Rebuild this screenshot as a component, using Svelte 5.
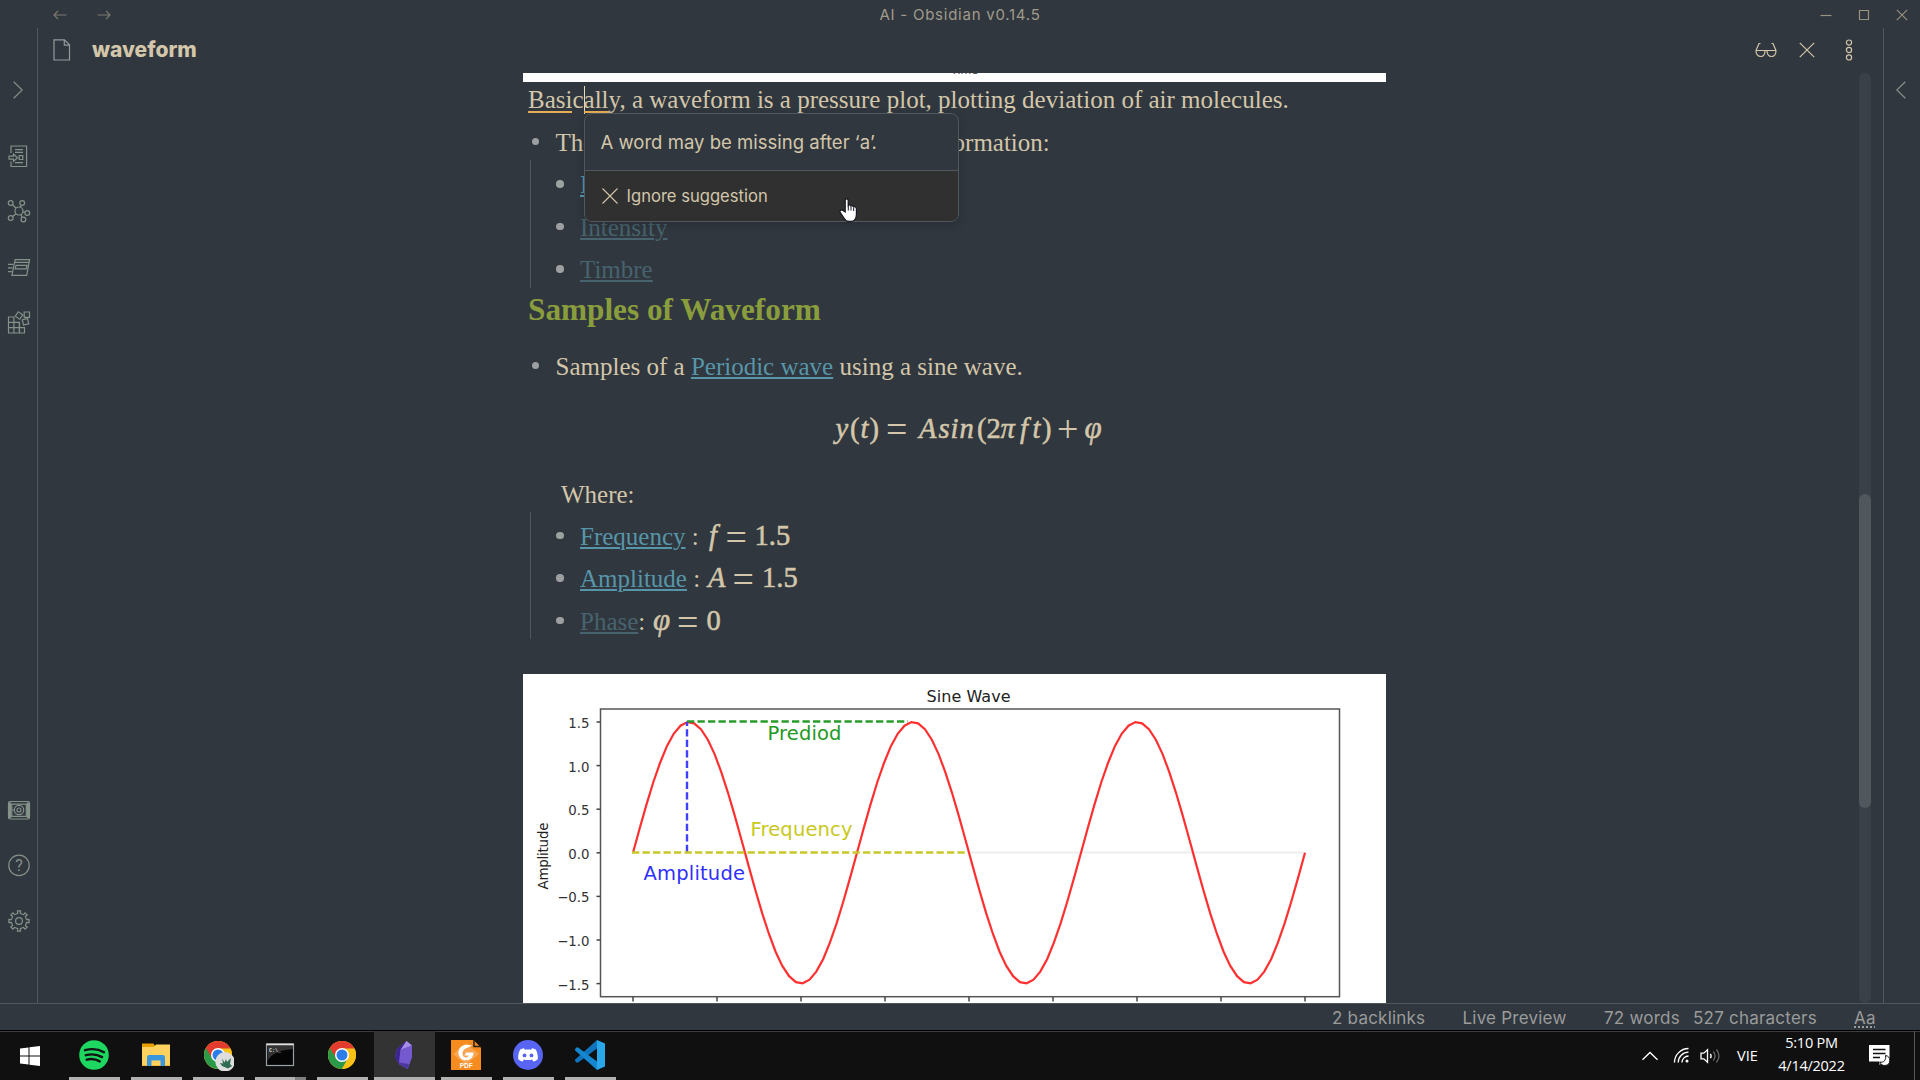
<script>
  // Sampled sine curve for the plot: three periods, amplitude 1.5
  const X0 = 633, X1 = 1305, Y0 = 852.7, AMP = 130.7;
  const STEPS = 99;
  const curve = Array.from({ length: STEPS + 1 }, (_, i) => {
    const x = X0 + ((X1 - X0) * i) / STEPS;
    const y = Y0 - AMP * Math.sin((i / STEPS) * 6 * Math.PI);
    return `${x.toFixed(1)},${y.toFixed(1)}`;
  }).join(' ');
  const yTicks = ['1.5', '1.0', '0.5', '0.0', '−0.5', '−1.0', '−1.5'].map((label, i) => ({ label, y: 722 + i * 43.6 }));
  const xTicks = Array.from({ length: 9 }, (_, i) => X0 + i * 84);

  // Gear outline with eight teeth
  const gear = Array.from({ length: 8 }, (_, i) => {
    const a = (i * Math.PI) / 4 - Math.PI / 2;
    return [[-0.29, 7.6], [-0.17, 7.8], [-0.15, 10.2], [0.15, 10.2], [0.17, 7.8], [0.29, 7.6]]
      .map(([d, r]) => `${(12 + r * Math.cos(a + d)).toFixed(2)},${(12 + r * Math.sin(a + d)).toFixed(2)}`)
      .join(' ');
  }).join(' ');

  // Typeset tokens: [text, x, kind]
  const mainFormula = [
    ['y', 312.5, 'it'], ['(', 327, 'rm'], ['t', 337.5, 'it'], [')', 346.5, 'rm'], ['=', 363, 'op'],
    ['A', 396, 'it'], ['s', 415.5, 'it'], ['i', 427.5, 'it'], ['n', 436.5, 'it'], ['(', 454, 'rm'],
    ['2', 463.5, 'rm'], ['π', 477.5, 'it'], ['f', 497, 'it'], ['t', 509.5, 'it'], [')', 519, 'rm'],
    ['+', 534, 'op'], ['φ', 561.5, 'phi']
  ];
  const params = [
    { name: 'Frequency', sep: ' :', faded: false, math: [['f', 4, 'it'], ['=', 20.5, 'op'], ['1.5', 49.5, 'rm']] },
    { name: 'Amplitude', sep: ' :', faded: false, math: [['A', 2, 'it'], ['=', 26.5, 'op'], ['1.5', 56, 'rm']] },
    { name: 'Phase', sep: ':', faded: true, math: [['φ', 1, 'phi'], ['=', 25, 'op'], ['0', 54.5, 'rm']] }
  ];
  const apps = ['spotify', 'explorer', 'chromeProfile', 'terminal', 'chrome', 'obsidian', 'foxit', 'discord', 'vscode'];
</script>

{#snippet tokens(list, y)}
  {#each list as [t, x, kind]}
    <text class={kind} {x} y={kind === 'op' ? y + 4.5 : y}>{t}</text>
  {/each}
{/snippet}

{#snippet chromeLogo()}
  <circle cx="16" cy="16" r="14" fill="#fbc116" />
  <path d="M16 16 L3.9 9 A14 14 0 0 0 16 30 L22 19.5 Z" fill="#2a9a48" />
  <path d="M16 9.5 H28.4 A14 14 0 0 1 16 30 L21.8 19.5 Z" fill="#fbc116" />
  <path d="M3.9 9 L10.3 19.4 L16 9.6 H28.4 A14 14 0 0 0 3.9 9Z" fill="#e33b2e" />
  <circle cx="16" cy="16" r="7" fill="#fff" />
  <circle cx="16" cy="16" r="5.5" fill="#2b7de9" />
{/snippet}

<div class="screen">
  <header class="titlebar">
    <div class="nav">
      <svg width="14" height="10" viewBox="0 0 14 10"><path d="M5 .8 1 5l4 4.2M1 5h12.5" /></svg>
      <svg width="14" height="10" viewBox="0 0 14 10"><path d="M9 .8 13 5 9 9.2M13 5H.5" /></svg>
    </div>
    <div class="title">AI - Obsidian v0.14.5</div>
    <div class="controls">
      <svg width="12" height="12" viewBox="0 0 12 12"><path d="M.5 6.5h11" /></svg>
      <svg width="12" height="12" viewBox="0 0 12 12"><path d="M1.5 1.5h9v9h-9z" /></svg>
      <svg width="12" height="12" viewBox="0 0 12 12"><path d="m.8.8 10.4 10.4M11.2.8.8 11.2" /></svg>
    </div>
  </header>

  <div class="workspace">
    <nav class="ribbon">
      <div class="toggle"><svg width="10" height="18" viewBox="0 0 10 18"><path d="M.7.7 9.2 9 .7 17.3" /></svg></div>
      <div class="cell"><svg class="ico" viewBox="0 0 24 24"><path d="M4 9V2h15.6v20.5H4V17.5M8 5.7h8M8 8.4h8M8 18.6h8M12.2 11.7h3.6v3.8h-3.6zM2 12.2h4.5V10l4 3.7-4 3.7V15.2H2z" /></svg></div>
      <div class="cell"><svg class="ico" viewBox="0 0 24 24"><circle cx="12" cy="12" r="4" /><circle cx="3.7" cy="4" r="2.4" /><circle cx="15.2" cy="4" r="2.4" /><circle cx="20.3" cy="14" r="2.4" /><circle cx="16.4" cy="20.5" r="2.4" /><circle cx="3.7" cy="19" r="2.4" /><path d="m5.5 5.7 3.7 3.5M14.3 6.2l-.9 2.1M15.9 13l2 .4M13.8 15.6l1.4 2.7M9.2 14.8l-3.7 2.7" /></svg></div>
      <div class="cell"><svg class="ico" viewBox="0 0 24 24"><path d="M1 9.3h5.2M1 12.8h4.500M1 16.6h3.8M8.2 4.7H22.6L19.7 20.3H4.9zM7.7 7.4h14.3M9 10.3h11l-.8 3.5H8.2z" /></svg></div>
      <div class="cell"><svg class="ico" viewBox="0 0 24 24"><g transform="translate(0 .5)"><path d="M1.5 6.5h5.4v16H1.5zM1.5 11.8h11v10.700M1.500 17.200h16v5.300H1.500M12.300 11.800v10.700M17.200 1.500h5.300v5.300h-5.300z" /><rect x="9.300" y="2.300" width="5.400" height="5.400" transform="rotate(35 12 5)" /><rect x="15.800" y="8.600" width="5.400" height="5.400" transform="rotate(-15 18.500 11.300)" /></g></svg></div>
      <div class="spacer"></div>
      <div class="cell"><svg class="ico" viewBox="0 0 24 24"><rect x="1.500" y="3.500" width="21" height="17.500" rx="1.500" /><path d="M4.800 6.200h14.500v12.200H4.800z" /><path d="M3 4.500v15.500M21 4.500v15.500" stroke-width="2.400" /><circle cx="12" cy="12" r="4.700" /><circle cx="12" cy="12" r="2" /><path d="M5.500 12h1.500" /></svg></div>
      <div class="cell"><svg class="ico" viewBox="0 0 24 24"><circle cx="12" cy="12.400" r="10.200" /><text class="q" x="12" y="18">?</text></svg></div>
      <div class="cell"><svg class="ico" viewBox="0 0 24 24"><polygon points={gear} /><circle cx="12" cy="12" r="3.400" /></svg></div>
    </nav>

    <main class="pane">
      <div class="pane-head">
        <svg class="doc" width="18" height="22" viewBox="0 0 18 22"><path d="M1 .8h10.500l5 5V21H1zM11.300.8v5.400h5.200" /></svg>
        <h1>waveform</h1>
        <div class="actions">
          <svg width="22" height="16" viewBox="0 0 22 16"><path d="M1 8.500h20M1 8.500 4 1.500h1.500M21 8.500 18 1.500h-1.500M1 8.500c0 4 2 6 5 6s4-2 4-6M12 8.500c0 4 1.500 6 4.500 6s4.500-2 4.500-6" /></svg>
          <svg width="16" height="16" viewBox="0 0 16 16"><path d="m.8.8 14.400 14.400M15.200.8.8 15.200" /></svg>
          <svg width="8" height="22" viewBox="0 0 8 22"><circle cx="4" cy="3.600" r="2.600" /><circle cx="4" cy="11" r="2.600" /><circle cx="4" cy="18.400" r="2.600" /></svg>
        </div>
      </div>

      <div class="editor">
        <article>
          <div class="strip"><span>Time</span></div>
          <p class="first"><span class="flag">Basi</span>c<i class="caret"></i><span class="flag">all</span>y, a waveform is a pressure plot, plotting deviation of air molecules.</p>
          <ul>
            <li>The waveform carries three kinds of information:</li>
          </ul>
          <ul class="nested">
            <li><span class="link">Frequency</span></li>
            <li><span class="link faded">Intensity</span></li>
            <li><span class="link faded">Timbre</span></li>
          </ul>
          <h2>Samples of Waveform</h2>
          <ul>
            <li>Samples of a <span class="link">Periodic wave</span> using a sine wave.</li>
          </ul>
          <svg class="formula" width="863" height="85">{@render tokens(mainFormula, 53.5)}</svg>
          <p class="where">Where:</p>
          <ul class="nested">
            {#each params as p}
              <li><span class="link" class:faded={p.faded}>{p.name}</span>{p.sep} <svg class="inline-math" width="100" height="10">{@render tokens(p.math, 10)}</svg></li>
            {/each}
          </ul>
          <svg class="plot" width="863" height="329" viewBox="523 674 863 329">
            <path d="M969 852.500H1305" stroke="#eee" stroke-width="2" />
            <polyline points={curve} fill="none" stroke="#ff3030" stroke-width="2.200" />
            <path d="M687 721.500H908" stroke="#2a9a2a" stroke-width="2.300" stroke-dasharray="7.300 3.200" />
            <path d="M687 852V722" stroke="#4040ff" stroke-width="2.400" stroke-dasharray="7.300 3.200" />
            <path d="M632 852.500H968" stroke="#c8c82a" stroke-width="2.300" stroke-dasharray="7.300 3.200" />
            <rect x="600.500" y="709" width="739" height="287.700" fill="none" stroke="#555" stroke-width="1.500" />
            {#each yTicks as t}
              <path d="M596.500 {t.y}H600.500" stroke="#444" stroke-width="1.500" />
              <text class="tick" x="589.500" y={t.y + 5.900}>{t.label}</text>
            {/each}
            {#each xTicks as x}
              <path d="M{x} 997V1001.500" stroke="#444" stroke-width="1.500" />
            {/each}
            <text class="cap" x="926.500" y="701.700" textLength="84">Sine Wave</text>
            <text class="axis" transform="translate(548 889.500) rotate(-90)" textLength="67">Amplitude</text>
            <text class="note" fill="#1f991f" x="767.500" y="740" textLength="74">Prediod</text>
            <text class="note" fill="#c8c820" x="750.500" y="836" textLength="102">Frequency</text>
            <text class="note" fill="#3030ff" x="643.500" y="879.700" textLength="101.500">Amplitude</text>
          </svg>
        </article>
        <div class="track"><div class="thumb"></div></div>
      </div>

      <div class="popup">
        <div class="message">A word may be missing after ‘a<span class="tight">’</span>.</div>
        <div class="ignore">
          <svg width="16" height="16" viewBox="0 0 16 16"><path d="m.5.5 15 15M15.500.5l-15 15" /></svg>
          Ignore suggestion
        </div>
      </div>
      <svg class="pointer" width="19" height="25" viewBox="0 0 19 25"><path d="M6.200 14V2.600c0-2.300 3-2.300 3 0V7.500c.8-.9 2.500-.6 2.800.6.900-.7 2.300-.3 2.600.8 1.300-.5 2.800.2 2.800 1.800v5.500c0 4-2 7.200-5.600 7.200H9.800c-2 0-3.400-1-4.500-2.900L1.200 14.300c-1-2 1.500-3.200 2.800-1.700z" fill="#fff" stroke="#15151f" stroke-width="1.200" /><path d="M9.300 8v4.500M12 8.500v4M14.700 9.500v3.500" stroke="#15151f" stroke-width="1" /></svg>
    </main>

    <aside class="right"><svg width="10" height="18" viewBox="0 0 10 18"><path d="M9.300.7.800 9l8.500 8.300" /></svg></aside>
  </div>

  <footer class="status">
    <span class="s1">2 backlinks</span>
    <span class="s2">Live Preview</span>
    <span class="s3">72 words</span>
    <span class="s4">527 characters</span>
    <span class="s5">Aa</span>
  </footer>

  <div class="taskbar">
    <div class="start"><svg width="20" height="20" viewBox="0 0 20 20"><path d="M0 2.600 8.500 1.400V9.500H0zM9.500 1.200 20 0V9.500H9.500zM0 10.500H8.500V18.600L0 17.400zM9.500 10.500H20V20L9.500 18.700z" fill="#fff" /></svg></div>
    {#each apps as app}
      <div class="app {app}">
        <svg width="32" height="32" viewBox="0 0 32 32">
          {#if app === 'spotify'}
            <circle cx="16" cy="16" r="14.800" fill="#1ed760" />
            <path d="M7 11.200c6.500-1.800 13.500-1.200 19 2M7.800 16.200c5.500-1.500 11.500-.9 16.300 1.900M8.700 20.700c4.500-1.200 9.200-.6 13 1.700" fill="none" stroke="#121212" stroke-linecap="round" stroke-width="2.400" />
          {:else if app === 'explorer'}
            <path d="M2 4.500h11.300l2 2.500H30v20H2z" fill="#e8a000" />
            <path d="M2 8h12l2-2.500H30V26.500H2z" fill="#ffd25f" />
            <path d="M7 27V18q0-2 2-2H23q2 0 2 2V27H20.500V21.500H11.500V27z" fill="#3a96dd" />
          {:else if app === 'chromeProfile'}
            {@render chromeLogo()}
            <circle cx="23" cy="22.800" r="9.700" fill="#dedede" />
            <path d="M20 19.500l2.500 4 1.500-3.500 1 3 4-4-1 6 2 2-4 2.500-6-2.500-2-3 3 .5z" fill="#2f6b50" />
          {:else if app === 'terminal'}
            <rect x="2.500" y="5" width="27" height="21.500" fill="#050505" stroke="#9aa0a6" stroke-width="1.200" />
            <path d="M2.500 5.500h27" stroke="#e0e0e0" stroke-width="1.800" />
            <path d="M3.500 7h25.500v3C20 11 8 13 3.500 22z" fill="#333" />
            <text class="cmd" x="5" y="12.500">C:\_</text>
          {:else if app === 'chrome'}
            {@render chromeLogo()}
          {:else if app === 'obsidian'}
            <path d="M18.500 2 9 10 7 18.500l4 6.500 8.500 5 4.500-12V6.500z" fill="#6c54c4" />
            <path d="M18.500 2 9 10l-2 8.500 4 6.500 1.500-14z" fill="#3b2690" />
            <path d="M18.500 2l-6 9 2-1 9.500-3.500z" fill="#a78ce8" />
            <path d="M12.500 11 24 6.500V18l-4.500 12-8.500-5z" fill="#7459cf" />
            <path d="M11 25l8.500 5 1.500-5-10-1.500z" fill="#4d379f" />
          {:else if app === 'foxit'}
            <path d="M1 1H23.500l7.500 7.500V31H1z" fill="#f68b1f" />
            <path d="M16 4 29 15 16 26 3 15z" fill="#f9a450" />
            <path d="M24 1v6.500h7" fill="none" stroke="#222" stroke-width="1.500" />
            <path d="M22 6.500C13 4 7.500 9 8.500 15c1 6 7 7.800 11.500 5.200 2.500-1.500 3.500-4 3.500-6.700H16l-1.500 3h4.300c-1 2-3.300 2.500-5 1.200-2-1.700-1.600-5.700.7-7.500C16.500 8.500 19 8.800 22 6.500z" fill="#fff" />
            <text class="pdf" x="16.200" y="28.700">PDF</text>
          {:else if app === 'discord'}
            <circle cx="16" cy="16" r="15" fill="#5865f2" />
            <g transform="translate(.5 0)">
              <path d="M11.500 9.300c-1.500.2-3 .8-3.800 1.300C6 13.500 5.500 17 5.700 20.200c1.300 1.100 2.900 1.900 4.600 2.200l1-1.900c2.500.8 6 .8 8.400 0l1 1.900c1.700-.3 3.300-1.100 4.600-2.200.2-3.200-.3-6.700-2-9.600-.8-.5-2.300-1.100-3.800-1.300l-.8 1.400c-2-.3-4.400-.3-6.400 0z" fill="#fff" />
              <circle cx="12" cy="16.400" r="1.900" fill="#5865f2" /><circle cx="19" cy="16.400" r="1.900" fill="#5865f2" />
            </g>
          {:else}
            <path d="M1.200 20.500 23 1V9.500L4.500 23.300q-1.500.8-2.500-.3l-.8-1q-.7-.8 0-1.500z" fill="#0f74bd" />
            <path d="M1.200 11.500 23 31V22.500L4.500 8.700Q3 7.900 2 9l-.8 1q-.7.800 0 1.500z" fill="#1587d0" />
            <path d="M23 1 31 4.500V27.500L23 31z" fill="#28a8ea" />
          {/if}
        </svg>
      </div>
    {/each}
    <div class="tray">
      <svg class="up" width="18" height="10" viewBox="0 0 18 10"><path d="M1.500 8.800 9 1.500l7.500 7.300" /></svg>
      <svg class="wifi" width="17" height="17" viewBox="0 0 17 17"><path d="M1.500 15.500A14 14 0 0 1 15.500 1.500M5.200 15.500A10.300 10.300 0 0 1 15.500 5.200M9 15.500A6.500 6.500 0 0 1 15.500 9" /><circle cx="14" cy="14" r="1.500" fill="#fff" stroke="none" /></svg>
      <svg class="vol" width="22" height="16" viewBox="0 0 22 16"><path d="M1 5.200h2.800L7.500 1.800v12.400L3.800 10.800H1z" /><path d="M10.300 5.800q1.700 2.200 0 4.400" /><path d="M13.300 3.500q3.500 4.500 0 9M16.400 1.500q5.200 6.500 0 13" stroke="#666" /></svg>
      <span class="lang">VIE</span>
      <div class="clock"><span>5:10 PM</span><span>4/14/2022</span></div>
      <svg class="notif" width="22" height="22" viewBox="0 0 22 22"><path d="M0 0h20.500v16.500H14.500L10.500 20V16.500H0z" fill="#fff" /><path d="M4 4.500h12.500M4 8.500h12.500M4 12.500h7" stroke="#111" stroke-width="1.300" /><path d="M16.500 10.500a5 5 0 1 1-5.500 6.500c3.500 1 6.500-2 5.500-6.500z" fill="#fff" stroke="#111" stroke-width="1" /></svg>
    </div>
  </div>
</div>

<style>
  :global(body) { margin: 0; background: #2f383e; }
  .screen { width: 1920px; height: 1080px; display: flex; flex-direction: column; overflow: hidden; background: #30373e; color: #d3c6aa; font-family: Inter, sans-serif; }
  svg { display: block; flex: none; fill: none; }

  .titlebar { height: 28px; display: grid; grid-template-columns: 1fr auto 1fr; align-items: center; flex: none; }
  .titlebar svg { stroke: #7b7a6e; stroke-width: 1.2; }
  .nav { display: flex; gap: 30px; padding-left: 52.5px; }
  .title { font-size: 15px; letter-spacing: 0.75px; color: #a09b8b; line-height: 28px; padding-top: 1px; }
  .controls { display: flex; justify-content: flex-end; gap: 26px; padding-right: 12.5px; }
  .controls svg { stroke: #98917f; }

  .workspace { height: 975px; display: flex; flex: none; }
  .ribbon { width: 37px; border-right: 1px solid #50575d; display: flex; flex-direction: column; padding-bottom: 54.5px; box-sizing: content-box; height: 920.5px; }
  .ribbon svg, .right svg { stroke: #859289; stroke-width: 1.2; }
  .toggle { height: 100.2px; padding: 53px 0 0 13px; box-sizing: border-box; flex: none; }
  .cell { height: 55.5px; display: flex; align-items: center; padding-left: 7px; flex: none; }
  .ico { width: 24px; height: 24px; }
  .spacer { flex: 1; }
  .q { fill: #859289; stroke: none; font: 16px Roboto, sans-serif; text-anchor: middle; }
  .right { width: 36px; border-left: 1px solid #50575d; padding: 53px 0 0 12px; box-sizing: border-box; }

  .pane { width: 1845px; position: relative; display: flex; flex-direction: column; }
  .pane-head { height: 45px; display: flex; align-items: center; padding: 0 30.5px 2px 15px; box-sizing: border-box; }
  .doc { stroke: #959a9c; stroke-width: 1.2; }
  h1 { margin: 0 0 0 21px; font-size: 21px; font-weight: 800; line-height: 24px; }
  .actions { margin-left: auto; display: flex; align-items: center; gap: 22px; }
  .actions svg { stroke: #d3c6aa; stroke-width: 1.2; }
  .actions svg:last-child { margin-left: 7.500px; }

  .editor { height: 930px; display: flex; overflow: hidden; }
  article { width: 863px; margin-left: 485px; font: 25px/34.5px "Liberation Serif", serif; }
  .strip { height: 9px; background: #fff; overflow: hidden; text-align: center; }
  .strip span { display: block; font: 11px/12px "DejaVu Sans", sans-serif; color: #444; margin: -8px 0 0 20px; }
  p { margin: 0; white-space: nowrap; }
  .first { height: 35.5px; line-height: 36px; padding-left: 5px; }
  .flag { box-shadow: inset 0 -2px #e9ad55; display: inline-block; height: 31px; line-height: 36px; vertical-align: top; }
  .caret { display: inline-block; width: 1px; height: 28px; margin-right: -1px; background: #e8dcc0; vertical-align: top; margin-top: 4px; }
  ul { list-style: none; margin: 0; padding: 0 0 0 32.5px; }
  li { height: 42.5px; padding-top: 8px; box-sizing: border-box; position: relative; white-space: nowrap; }
  li::before { content: ""; position: absolute; left: -24px; top: 20px; width: 7.5px; height: 7.5px; border-radius: 50%; background: #9da0a0; }
  .nested { margin-left: 7px; padding-left: 49px; border-left: 1px solid #50575d; }
  .link { color: #5795a9; text-decoration: underline; text-decoration-thickness: 2px; text-underline-offset: 2px; }
  .faded { color: #47636e; }
  h2 { margin: 0; height: 54px; padding: 4.5px 0 0 5px; box-sizing: border-box; font-size: 31.25px; line-height: 36px; color: #8a9d3d; white-space: nowrap; }
  .formula { overflow: visible; }
  .where { height: 42.5px; padding: 8.500px 0 0 38px; box-sizing: border-box; }
  .inline-math { display: inline-block; overflow: visible; vertical-align: baseline; }
  .it, .rm, .op, .phi { fill: #d3c6aa; stroke: #d3c6aa; stroke-width: 0.55; font: 28.500px "Liberation Serif", serif; }
  .it, .phi { font-style: italic; }
  .phi { font-size: 31px; }
  .op { font-size: 38px; stroke-width: 0; }
  .plot { background: #fff; margin-top: 35px; }
  .plot text { font-family: "DejaVu Sans", sans-serif; }
  .tick { font-size: 13.3px; text-anchor: end; fill: #333; }
  .cap { font-size: 16px; fill: #222; }
  .axis { font-size: 13.5px; fill: #222; }
  .note { font-size: 19.5px; }

  .track { width: 12px; height: 930px; margin-left: 473px; background: #394047; border-radius: 6px; display: flex; flex-direction: column; }
  .thumb { height: 314px; margin-top: 421px; border-radius: 6px; background: #50575d; }

  .popup { position: absolute; left: 546px; top: 85px; width: 375px; height: 109px; box-sizing: border-box; border: 1px solid #50575d; border-radius: 8px; background: #30373e; overflow: hidden; box-shadow: 0 3px 10px rgba(0, 0, 0, 0.18); }
  .message { height: 57px; box-sizing: border-box; border-bottom: 1px solid #50575d; padding-left: 15.5px; font-size: 18.55px; line-height: 57px; white-space: nowrap; }
  .tight { letter-spacing: -3.5px; }
  .ignore { height: 50px; padding-bottom: 1px; background: #303030; display: flex; align-items: center; gap: 8.5px; padding-left: 17px; font-size: 16.6px; white-space: nowrap; }
  .ignore svg { stroke: #d3c6aa; stroke-width: 1.1; }
  .pointer { position: absolute; left: 801px; top: 170px; }

  .status { height: 26px; border-top: 1px solid #50575d; display: flex; color: #9a9b9b; font-size: 17px; letter-spacing: 0.22px; line-height: 28px; flex: none; white-space: nowrap; }
  .s1 { margin-left: 1332px; width: 130.5px; }
  .s2 { width: 141.5px; }
  .s3 { width: 89px; }
  .s4 { width: 161px; }
  .s5 { text-decoration: underline dotted 2px; text-underline-offset: 2px; }

  .taskbar { height: 50px; box-sizing: border-box; border-top: 1px solid #000; box-shadow: inset 0 1px #3c3c3c; background: #101010; display: flex; color: #fff; }
  .start { width: 64px; display: flex; align-items: center; padding-left: 20px; box-sizing: border-box; flex: none; }
  .app { width: 61px; margin-right: 1px; display: flex; padding: 8px 0 0 14px; box-sizing: border-box; background: linear-gradient(#b3b0b0, #b3b0b0) 5px 100% / 51px 3px no-repeat; flex: none; }
  .terminal { background: linear-gradient(90deg, #b3b0b0 40px, #808080 40px) 5px 100% / 51px 3px no-repeat; }
  .obsidian { background: linear-gradient(#b3b0b0, #b3b0b0) 0 100% / 61px 3px no-repeat, #333; }
  .cmd { font: bold 5px "Liberation Mono", monospace; fill: #ddd; }
  .pdf { font: bold 6.5px "Liberation Sans", sans-serif; fill: #fff; text-anchor: middle; }
  .tray { margin-left: auto; width: 279px; box-sizing: border-box; display: flex; align-items: center; border-right: 1px solid #555; margin-right: 5px; font: 14.5px "Open Sans", sans-serif; white-space: nowrap; }
  .tray svg { stroke: #fff; stroke-width: 1.3; }
  .up { margin-left: 5px; }
  .wifi { margin-left: 14px; }
  .vol { margin-left: 10px; }
  .lang { width: 24px; margin-left: 15px; font-size: 14.5px; }
  .clock { width: 80px; margin: -2px 0 0 10.5px; display: flex; flex-direction: column; align-items: center; line-height: 22.5px; letter-spacing: -0.25px; }
  .tray .notif { margin-left: 17px; stroke-width: 0; }
</style>
